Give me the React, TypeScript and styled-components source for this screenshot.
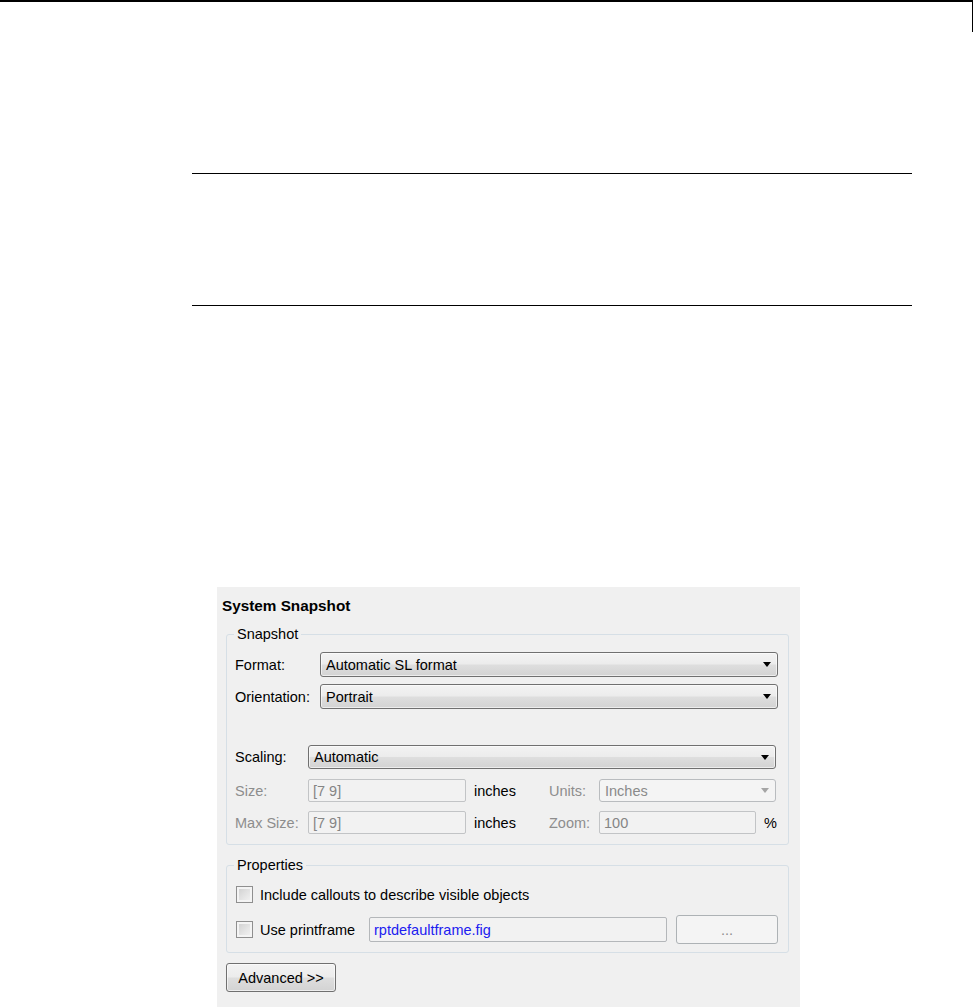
import styled, { createGlobalStyle } from 'styled-components';

const GlobalStyle = createGlobalStyle`
  html, body {
    margin: 0;
    padding: 0;
    background: #ffffff;
  }
  body {
    font-family: "Liberation Sans", Arial, sans-serif;
    font-size: 14.5px;
    color: #000;
  }
`;

const Page = styled.div`
  width: 973px;
  height: 1007px;
  overflow: hidden;
`;

const PageHeader = styled.div`
  width: 973px;
  height: 32px;
  box-sizing: border-box;
  border-top: 2px solid #000;
  border-right: 1px solid #000;
`;

const NoteBox = styled.div`
  margin: 141px 0 0 192px;
  width: 720px;
  height: 133px;
  box-sizing: border-box;
  border-top: 1px solid #000;
  border-bottom: 1px solid #000;
`;

const Dialog = styled.div`
  margin: 281px 0 0 217px;
  width: 583px;
  height: 420px;
  box-sizing: border-box;
  padding-top: 10px;
  background: #f0f0f0;
`;

const Title = styled.div`
  padding-left: 5px;
  font-size: 15.3px;
  font-weight: 700;
  line-height: 18px;
`;

const Body = styled.div`
  padding: 0 11px 0 9px;
`;

const Group = styled.div<{ $top: number; $pad: string }>`
  position: relative;
  margin-top: ${(p) => p.$top}px;
  padding: ${(p) => p.$pad};
  border: 1px solid #d6dfe6;
  border-radius: 3px;
`;

const Legend = styled.span`
  position: absolute;
  top: -9px;
  left: 7px;
  padding: 0 3px;
  line-height: 17px;
  background: #f0f0f0;
`;

const Row = styled.div<{ $h: number; $gap?: number; $right?: number }>`
  display: flex;
  align-items: center;
  height: ${(p) => p.$h}px;
  margin-top: ${(p) => p.$gap ?? 0}px;
  margin-right: ${(p) => p.$right ?? 0}px;
`;

const Label = styled.span<{ $w: number; $off?: boolean }>`
  flex: none;
  width: ${(p) => p.$w}px;
  color: ${(p) => (p.$off ? '#8d8d8d' : '#000')};
  white-space: nowrap;
`;

const Select = styled.div<{ $off?: boolean }>`
  flex: 1;
  height: 100%;
  box-sizing: border-box;
  display: flex;
  align-items: center;
  justify-content: space-between;
  padding: 0 6px 0 5px;
  border: 1px solid ${(p) => (p.$off ? '#b9bcbf' : '#707070')};
  border-radius: 3px;
  color: ${(p) => (p.$off ? '#8a8a8a' : '#000')};
  background: ${(p) =>
    p.$off
      ? '#f4f4f4'
      : 'linear-gradient(#f3f3f3 0%, #ececec 48%, #dedede 52%, #d3d3d3 100%)'};
  box-shadow: ${(p) => (p.$off ? 'none' : 'inset 0 0 0 1px rgba(255,255,255,0.6)')};
`;

const Arrow = styled.span<{ $off?: boolean }>`
  width: 0;
  height: 0;
  border-left: 4px solid transparent;
  border-right: 4px solid transparent;
  border-top: 5px solid ${(p) => (p.$off ? '#a5a5a5' : '#000')};
`;

const TextField = styled.div<{ $w: number; $h: number; $blue?: boolean }>`
  flex: none;
  width: ${(p) => p.$w}px;
  height: ${(p) => p.$h}px;
  box-sizing: border-box;
  display: flex;
  align-items: center;
  padding-left: 4px;
  border: 1px solid ${(p) => (p.$blue ? '#b4b7ba' : '#c2c4c6')};
  border-radius: 2px;
  background: #f2f2f2;
  color: ${(p) => (p.$blue ? '#2020f0' : '#858585')};
`;

const Unit = styled.span<{ $w?: number }>`
  flex: none;
  margin-left: 8px;
  width: ${(p) => (p.$w ? `${p.$w}px` : 'auto')};
`;

const Check = styled.span`
  flex: none;
  width: 17px;
  height: 17px;
  box-sizing: border-box;
  border: 1px solid #8f8f8f;
  background: linear-gradient(135deg, #cdcdcd 0%, #e6e6e6 60%, #f4f4f4 100%);
  box-shadow: inset 0 0 0 2px #f4f4f4;
`;

const CheckText = styled.span<{ $w?: number }>`
  flex: none;
  margin-left: 7px;
  width: ${(p) => (p.$w ? `${p.$w}px` : 'auto')};
  white-space: nowrap;
`;

const Button = styled.div<{ $w: number; $h: number; $off?: boolean; $gap?: number }>`
  flex: none;
  width: ${(p) => p.$w}px;
  height: ${(p) => p.$h}px;
  margin-left: ${(p) => p.$gap ?? 0}px;
  box-sizing: border-box;
  display: flex;
  align-items: center;
  justify-content: center;
  border: 1px solid ${(p) => (p.$off ? '#adb2b5' : '#707070')};
  border-radius: 3px;
  color: ${(p) => (p.$off ? '#8d8d8d' : '#000')};
  background: ${(p) =>
    p.$off
      ? '#f4f4f4'
      : 'linear-gradient(#f3f3f3 0%, #ececec 48%, #dedede 52%, #d3d3d3 100%)'};
  box-shadow: ${(p) => (p.$off ? 'none' : 'inset 0 0 0 1px rgba(255,255,255,0.6)')};
`;

const Footer = styled.div`
  margin-top: 10px;
`;

export default function App() {
  return (
    <>
      <GlobalStyle />
      <Page>
        <PageHeader />
        <NoteBox />
        <Dialog>
          <Title>System Snapshot</Title>
          <Body>
            <Group $top={19} $pad="17px 10px 10px 8px">
              <Legend>Snapshot</Legend>
              <Row $h={25}>
                <Label $w={85}>Format:</Label>
                <Select>
                  <span>Automatic SL format</span>
                  <Arrow />
                </Select>
              </Row>
              <Row $h={25} $gap={7}>
                <Label $w={85}>Orientation:</Label>
                <Select>
                  <span>Portrait</span>
                  <Arrow />
                </Select>
              </Row>
              <Row $h={24} $gap={36} $right={2}>
                <Label $w={73}>Scaling:</Label>
                <Select>
                  <span>Automatic</span>
                  <Arrow />
                </Select>
              </Row>
              <Row $h={23} $gap={10} $right={2}>
                <Label $w={73} $off>Size:</Label>
                <TextField $w={158} $h={23}>[7 9]</TextField>
                <Unit $w={75}>inches</Unit>
                <Label $w={50} $off>Units:</Label>
                <Select $off>
                  <span>Inches</span>
                  <Arrow $off />
                </Select>
              </Row>
              <Row $h={23} $gap={9}>
                <Label $w={73} $off>Max Size:</Label>
                <TextField $w={158} $h={23}>[7 9]</TextField>
                <Unit $w={75}>inches</Unit>
                <Label $w={50} $off>Zoom:</Label>
                <TextField $w={157} $h={23}>100</TextField>
                <Unit>%</Unit>
              </Row>
            </Group>

            <Group $top={20} $pad="20px 10px 8px 9px">
              <Legend>Properties</Legend>
              <Row $h={17}>
                <Check />
                <CheckText>Include callouts to describe visible objects</CheckText>
              </Row>
              <Row $h={29} $gap={12}>
                <Check />
                <CheckText $w={109}>Use printframe</CheckText>
                <TextField $w={298} $h={25} $blue>rptdefaultframe.fig</TextField>
                <Button $w={102} $h={29} $off $gap={9}>...</Button>
              </Row>
            </Group>

            <Footer>
              <Button $w={110} $h={29}>Advanced &gt;&gt;</Button>
            </Footer>
          </Body>
        </Dialog>
      </Page>
    </>
  );
}
